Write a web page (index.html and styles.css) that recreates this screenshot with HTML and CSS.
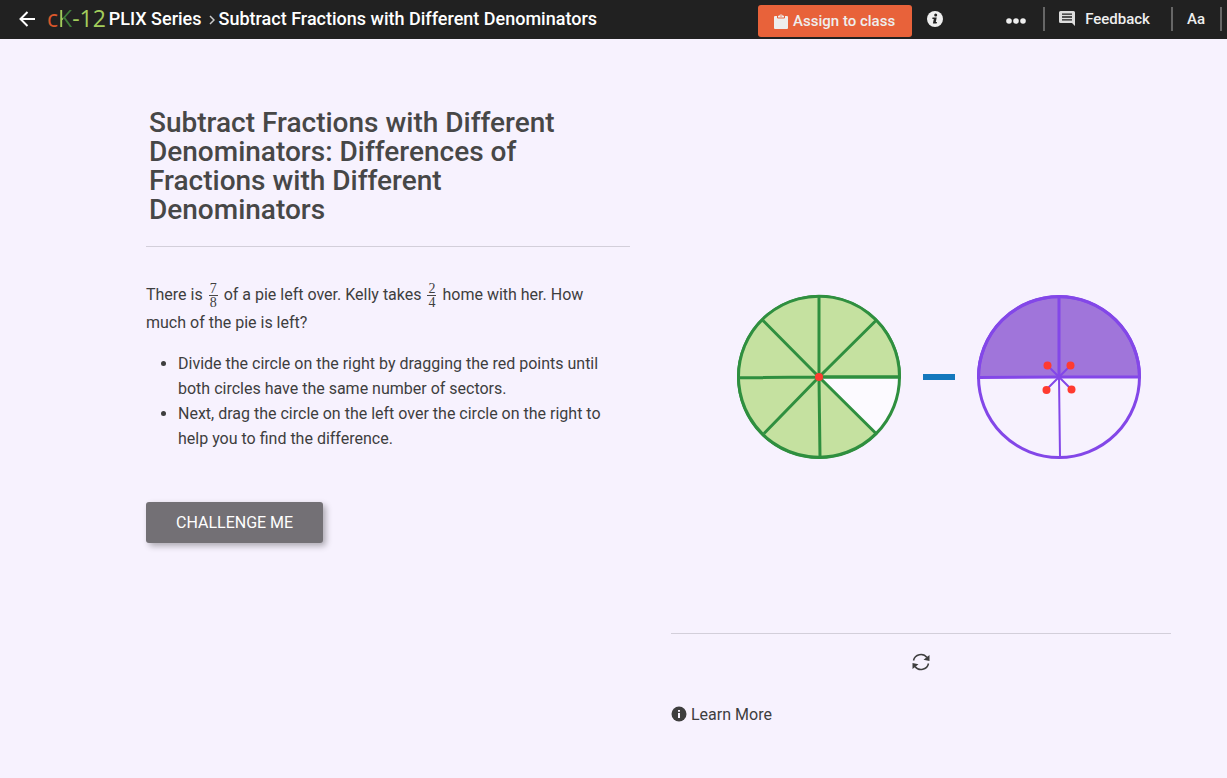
FILE: index.html
```html
<!DOCTYPE html>
<html lang="en">
<head>
    <meta charset="UTF-8">
    <meta name="viewport" content="width=device-width, initial-scale=1.0">
    <title>Subtract Fractions with Different Denominators</title>
    <link rel="stylesheet" href="styles.css">
</head>
<body>
    <header class="topbar">
        <a class="back" href="#" aria-label="Back">
            <svg width="16" height="16" viewBox="0 0 16 16" fill="none" stroke="#fff" stroke-width="2"><path d="M16 8H1.5M8.5 1L1.5 8l7 7"/></svg>
        </a>
        <a class="logo" href="#"><span class="logo-c">c</span><span class="logo-k">K</span><span class="logo-num">-12</span></a>
        <a class="crumb" href="#">PLIX Series</a>
        <svg class="chevron" width="6" height="10" viewBox="0 0 6 10" fill="none" stroke="#ccc" stroke-width="1.5"><path d="M1 1l4 4-4 4"/></svg>
        <span class="crumb">Subtract Fractions with Different Denominators</span>
        <div class="tools">
            <button class="assign">
                <svg width="14" height="15" viewBox="0 0 14 15"><path fill="#eee" d="M1 2h3V1.8h1.2a1.9 1.9 0 0 1 3.6 0H10V2h3a1 1 0 0 1 1 1v11a1 1 0 0 1-1 1H1a1 1 0 0 1-1-1V3a1 1 0 0 1 1-1z"/><path fill="none" stroke="#e8623a" d="M3.500 2v2h7V2"/><circle cx="7" cy="2" r=".7" fill="#e8623a"/></svg>
                Assign to class
            </button>
            <button class="info" aria-label="Info">
                <svg width="16" height="16" viewBox="0 0 16 16"><circle cx="8" cy="8" r="8" fill="#eee"/><circle cx="8.700" cy="4" r="1.500" fill="#212121"/><path fill="#212121" d="M5.500 6.500h4.200L8.800 11h1.200l-.4 1.500H5.900l.9-4.600H5.300z"/></svg>
            </button>
            <button class="more" aria-label="More">
                <svg width="20" height="6" viewBox="0 0 20 6" fill="#eee"><circle cx="3" cy="3" r="2.800"/><circle cx="10" cy="3" r="2.800"/><circle cx="17" cy="3" r="2.800"/></svg>
            </button>
            <button class="feedback">
                <svg width="16" height="15" viewBox="0 0 16 15"><path fill="#ddd" d="M1.500 0h13A1.500 1.500 0 0 1 16 1.500V15l-3-3H1.500A1.500 1.500 0 0 1 0 10.500v-9A1.500 1.500 0 0 1 1.500 0z"/><path stroke="#212121" stroke-width="1.300" d="M3 3.200h10M3 6h10M3 8.800h10"/></svg>
                Feedback
            </button>
            <button class="font-size">Aa</button>
        </div>
    </header>

    <main class="plix">
        <section class="lesson">
            <h1>Subtract Fractions with Different Denominators: Differences of Fractions with Different Denominators</h1>
            <p>There is <span class="frac"><span>7</span><span>8</span></span> of a pie left over. Kelly takes <span class="frac"><span>2</span><span>4</span></span> home with her. How much of the pie is left?</p>
            <ul>
                <li>Divide the circle on the right by dragging the red points until both circles have the same number of sectors.</li>
                <li>Next, drag the circle on the left over the circle on the right to help you to find the difference.</li>
            </ul>
            <button class="challenge">CHALLENGE ME</button>
        </section>

        <section class="activity">
            <svg class="canvas" viewBox="0 1 500 525">
                <!-- seven of eight sectors -->
                <g stroke="#2f8f3f" stroke-width="3">
                    <circle cx="148" cy="270" r="80.500" fill="#fff" fill-opacity=".6"/>
                    <path fill="#c5e1a0" d="M148 270L205 326.500A80.500 80.500 0 1 1 228.500 270z"/>
                    <path d="M148 270V189.500M148 270h80M148 270l57-56.500M148 270l-56-56.500M148 270l-80.500 .8M148 270l-55 56.500M148 270l1 80.500"/>
                </g>
                <circle cx="148" cy="270" r="4" fill="#ff3b30"/>
                <path stroke="#1478bd" stroke-width="6" d="M252 270h32"/>
                <!-- two of four sectors -->
                <g fill="none" stroke="#8347e8" stroke-width="3">
                    <path fill="#a075da" d="M388 270l-80.500 .5A80.500 80.500 0 0 1 468.500 270z"/>
                    <circle cx="388" cy="270" r="80.500"/>
                    <path d="M388 270V189.500"/>
                    <path stroke-width="2" d="M388 270l1 80.500M388 270l-12-12M388 270l12-12M388 270l-13 13M388 270l13 13"/>
                </g>
                <g fill="#ff3b30">
                    <circle cx="376.500" cy="258.500" r="4"/>
                    <circle cx="399.500" cy="258.500" r="4"/>
                    <circle cx="375.500" cy="283" r="4"/>
                    <circle cx="400.500" cy="282.500" r="4"/>
                </g>
            </svg>
            <div class="controls">
                <button class="reset" aria-label="Reset">
                    <svg width="18" height="18" viewBox="0 0 18 18"><path fill="none" stroke="#3e3e3e" stroke-width="1.500" d="M1.500 7.500A7.600 7.600 0 0 1 15 4.500M16.500 10.500A7.600 7.600 0 0 1 3 13.500"/><path fill="#3e3e3e" d="M17.500 2v6l-6-1.200zM.5 16v-6l6 1.200z"/></svg>
                </button>
            </div>
            <a class="learn" href="#">
                <svg width="16" height="16" viewBox="0 0 16 16"><circle cx="8" cy="8" r="7.500" fill="#3e3e3e"/><path fill="#f7f2fe" d="M7 4h2v1.800H7zM7 7h2v5H7z"/></svg>
                Learn More
            </a>
        </section>
    </main>
</body>
</html>
```
FILE: styles.css
```css
* {
    box-sizing: border-box;
}
body {
    margin: 0;
    background: #f7f2fe;
    color: #3e3e3e;
    font-family: Roboto, "Liberation Sans", sans-serif;
    font-size: 16px;
}
a {
    color: inherit;
    text-decoration: none;
}
button {
    font-family: inherit;
    border: none;
    background: none;
    padding: 0;
    color: #eee;
    cursor: pointer;
}
svg {
    display: block;
}
.topbar {
    display: flex;
    align-items: center;
    height: 39px;
    padding: 0 5px 2px 19px;
    background: #212121;
    color: #fff;
}
.back {
    margin-right: 12px;
}
.logo {
    margin-right: 3px;
    font-family: "Open Sans", sans-serif;
    font-size: 23px;
    line-height: 37px;
}
.logo-c {
    color: #d9572b;
}
.logo-k {
    background: linear-gradient(to right, #a3cd5c 35%, #3f7d3a 35%);
    -webkit-background-clip: text;
    background-clip: text;
    color: transparent;
}
.logo-num {
    color: #a3cd5c;
}
.crumb {
    font-size: 18px;
    font-weight: 500;
    white-space: nowrap;
}
.chevron {
    margin: 2px 4px 0 7px;
}
.tools {
    display: flex;
    align-items: center;
    margin-left: auto;
}
.tools button {
    display: flex;
    align-items: center;
    font-size: 15px;
    font-weight: 500;
}
.tools .assign {
    gap: 5px;
    height: 32px;
    margin: 5px 15px 0 0;
    padding: 0 17px 0 16px;
    border-radius: 3px;
    background: #e8623a;
}
.tools .info {
    margin-top: 1px;
}
.tools .more {
    margin: 4px 17px 0 63px;
}
.tools .feedback,
.tools .font-size {
    height: 24px;
    border-left: 2px solid #666;
}
.tools .feedback {
    gap: 10px;
    padding: 0 21px 0 14px;
}
.tools .font-size {
    padding: 0 15px 0 14px;
    border-right: 2px solid #666;
}
.plix {
    display: grid;
    grid-template-columns: 484fr 500fr;
    column-gap: 41px;
    padding: 69px 56px 0 146px;
}
h1 {
    margin: 0;
    padding: 0 40px 22px 3px;
    border-bottom: 1px solid #d3cfda;
    color: #474747;
    font-size: 28px;
    font-weight: 500;
    line-height: 29px;
}
.lesson p {
    margin: 34px 0 14px;
    padding-right: 20px;
    line-height: 28px;
}
.frac {
    display: inline-flex;
    flex-direction: column;
    vertical-align: middle;
    margin: 0 2px;
    font-family: "Liberation Serif", serif;
    font-size: 14px;
    line-height: 13px;
    text-align: center;
}
.frac span:first-child {
    border-bottom: 1px solid #474747;
    padding: 0 1px;
}
.lesson ul {
    margin: 0;
    padding-left: 32px;
    line-height: 25px;
}
.challenge {
    display: block;
    margin-top: 51px;
    padding: 0 30px;
    border-radius: 3px;
    background: #737075;
    box-shadow: 3px 3px 6px rgba(0, 0, 0, 0.3);
    color: #fff;
    font-size: 16px;
    line-height: 41px;
}
.canvas {
    width: 100%;
}
.controls {
    display: flex;
    justify-content: center;
    padding: 19px 0;
    border-top: 1px solid #d3cfda;
}
.learn {
    display: inline-flex;
    align-items: center;
    gap: 4px;
    margin-top: 15px;
    line-height: 20px;
}
.learn svg {
    margin-bottom: 3px;
}
```
